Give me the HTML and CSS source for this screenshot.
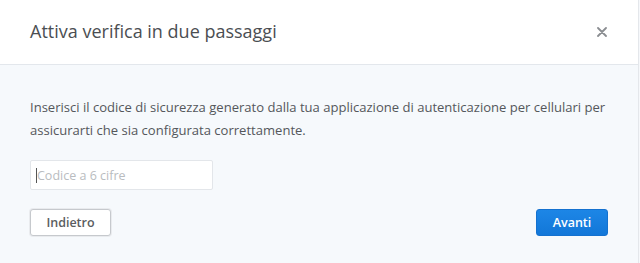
FILE: index.html
```html
<!DOCTYPE html>
<html lang="it">
<head>
  <meta charset="UTF-8">
  <title>Attiva verifica in due passaggi</title>
  <link rel="stylesheet" href="styles.css">
</head>
<body>

  <div class="modal">
    <div class="modal-header">
      <h1 class="modal-title">Attiva verifica in due passaggi</h1>
      <button class="modal-close" aria-label="Chiudi">
        <svg width="10" height="10" viewBox="0 0 10 10">
          <path d="M1 1 L9 9 M9 1 L1 9" stroke="#8a8d91" stroke-width="1.8" stroke-linecap="round"/>
        </svg>
      </button>
    </div>

    <div class="modal-body">
      <p class="modal-text">Inserisci il codice di sicurezza generato dalla tua applicazione di autenticazione per cellulari per assicurarti che sia configurata correttamente.</p>

      <!-- finto cursore: lo screenshot non mostra il caret nativo -->
      <div class="input-wrap">
        <span class="caret"></span>
        <input class="code-input" type="text" placeholder="Codice a 6 cifre">
      </div>

      <div class="modal-actions">
        <button class="btn btn-secondary">Indietro</button>
        <button class="btn btn-primary">Avanti</button>
      </div>
    </div>
  </div>

</body>
</html>
```

FILE: styles.css
```css
body {
  margin: 0;
  font-family: 'Open Sans', sans-serif;
  background: #f6f8fb;
}

.modal {
  width: 638px;
  height: 263px;
  border-right: 1px solid #e4e7eb;
  background: #f6f9fc;
}

.modal-header {
  height: 64px;
  background: #fff;
  border-bottom: 1px solid #e3e7ec;
  display: flex;
  align-items: center;
  justify-content: space-between;
  padding: 0 30px;
}

.modal-title {
  margin: 0;
  font-size: 18px;
  font-weight: normal;
  color: #4b4e52;
  padding-bottom: 2px;
}

.modal-close {
  background: none;
  border: none;
  padding: 0;
  width: 12px;
  height: 12px;
  display: flex;
  align-items: center;
  justify-content: center;
  cursor: pointer;
}

.modal-body {
  padding: 31px 30px 0;
}

.modal-text {
  margin: 0;
  font-size: 13.05px;
  line-height: 23px;
  color: #54575b;
}

.input-wrap {
  position: relative;
  width: 183px;
  margin-top: 18px;
}

.caret {
  position: absolute;
  left: 6px;
  top: 8px;
  width: 1px;
  height: 15px;
  background: #555;
}

.code-input {
  display: block;
  box-sizing: border-box;
  width: 183px;
  height: 30px;
  border: 1px solid #e3e6ea;
  border-radius: 2px;
  background: #fff;
  padding: 0 6px;
  font-family: 'Open Sans', sans-serif;
  font-size: 12.5px;
  color: #333;
  outline: none;
}

.code-input::placeholder {
  color: #b9bcc0;
}

.modal-actions {
  display: flex;
  justify-content: space-between;
  margin-top: 19px;
}

.btn {
  box-sizing: border-box;
  height: 27px;
  border-radius: 3px;
  font-family: 'Open Sans', sans-serif;
  font-size: 12.5px;
  font-weight: 600;
  cursor: pointer;
}

.btn-secondary {
  width: 81px;
  background: #fff;
  color: #5a5d61;
  border: 1px solid #c6c9cd;
  box-shadow: 0 0 0 1px #e9ebee;
}

.btn-primary {
  width: 72px;
  background: linear-gradient(#1d86e6, #1277d8);
  color: #fff;
  border: 1px solid #1471cf;
}
```
